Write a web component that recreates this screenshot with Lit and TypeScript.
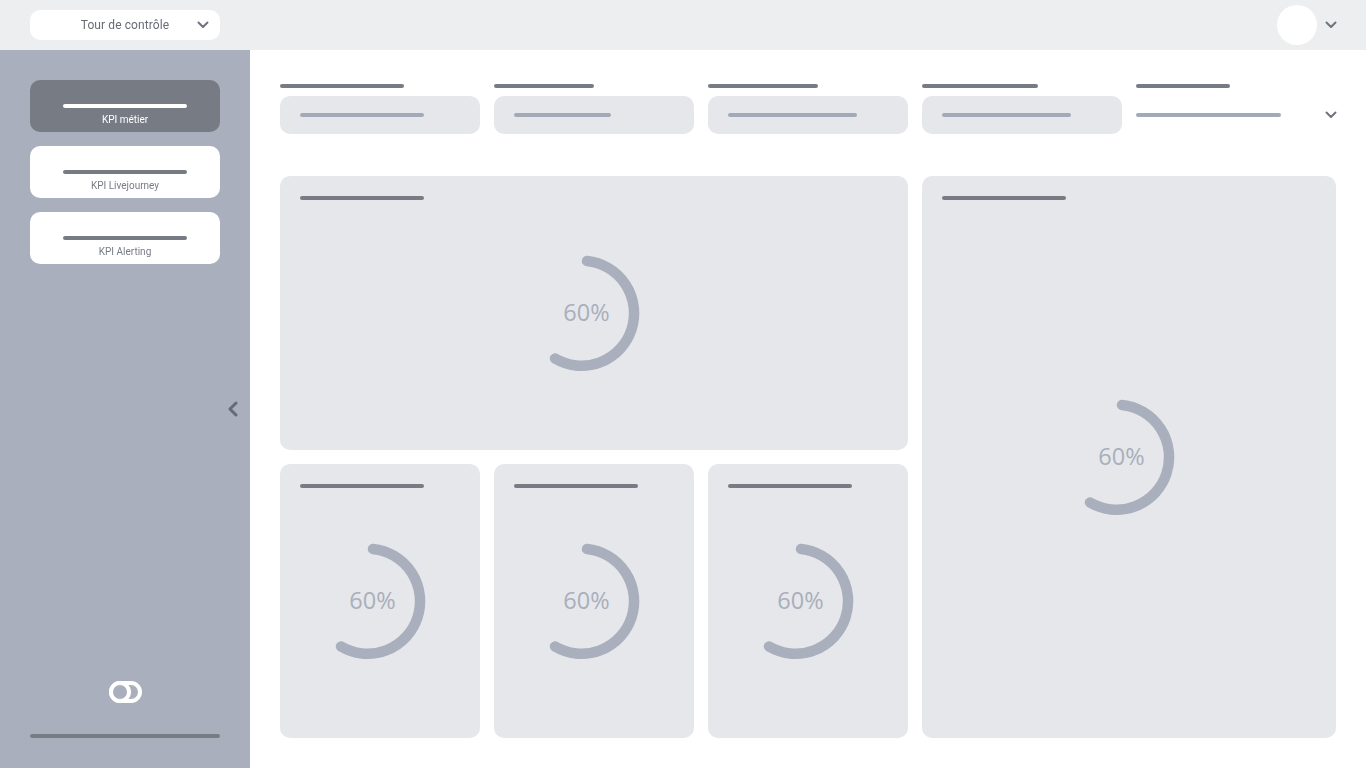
import { LitElement, html, css, svg } from "lit";
import { customElement } from "lit/decorators.js";

const chevron = () => html`<svg width="12" height="8" viewBox="0 0 12 8"><path d="M1.5 1.5 6 6l4.5-4.5" fill="none" stroke="#6f747d" stroke-width="2" stroke-linecap="round" stroke-linejoin="round"/></svg>`;

@customElement("kpi-donut")
class KpiDonut extends LitElement {
  static styles = css`
    :host { display: block; width: 200px; height: 124px; }
    svg { display: block; }
    text { font-family: "Open Sans", sans-serif; font-size: 23.5px; font-weight: 400; fill: #a9afbc; }
  `;
  render() {
    return html`<svg width="200" height="124" viewBox="0 0 200 124">
      <path d="M93 10 A52.5 52.5 0 1 1 61 107.5" fill="none" stroke="#a9afbc" stroke-width="10.5" stroke-linecap="round"/>
      ${svg`<text x="92.5" y="69.5" text-anchor="middle">60%</text>`}
    </svg>`;
  }
}

@customElement("app-root")
class AppRoot extends LitElement {
  static styles = css`
    :host { display: block; width: 1366px; height: 768px; overflow: hidden; background: #fff; font-family: Roboto, sans-serif; }
    .header { height: 50px; background: #eceef0; display: flex; align-items: center; padding: 0 29px 0 30px; box-sizing: border-box; }
    .select { width: 190px; height: 30px; border-radius: 10px; background: #fff; display: grid; grid-template-columns: 1fr auto 1fr; align-items: center; padding: 0 11px; box-sizing: border-box; font-size: 12px; letter-spacing: 0.1px; color: #666b74; }
    .select svg { justify-self: end; grid-column: 3; }
    .select span { grid-column: 2; will-change: opacity; }
    .avatar { width: 40px; height: 40px; border-radius: 50%; background: #fff; margin-left: auto; margin-right: 8px; }
    .body { display: flex; height: 718px; }
    .sidebar { position: relative; width: 250px; flex: none; background: #a9afbc; box-sizing: border-box; padding: 30px; display: flex; flex-direction: column; }
    .nav { display: flex; flex-direction: column; gap: 14px; }
    .nav-item { height: 52px; border-radius: 10px; background: #fff; display: flex; flex-direction: column; align-items: center; padding-top: 24px; box-sizing: border-box; color: #777b84; font-size: 10px; line-height: 12px; }
    .nav-item span { will-change: opacity; }
    .nav-item.active { background: #777b84; color: #fff; }
    .nav-item i { display: block; width: 124px; height: 4px; border-radius: 2px; background: #777b84; margin-bottom: 6px; flex: none; }
    .nav-item.active i { background: #fff; }
    .logo { margin-top: auto; align-self: center; display: block; margin-bottom: 31px; }
    .foot { height: 4px; border-radius: 2px; background: #777b84; flex: none; }
    .collapse { position: absolute; left: 228px; top: 351px; display: block; }
    .main { flex: 1; padding: 34px 30px 30px; box-sizing: border-box; }
    .bar { display: block; height: 4px; border-radius: 2px; }
    .dark { background: #777b84; }
    .light { background: #a3aab7; }
    .filters { display: grid; grid-template-columns: repeat(5, 200px); column-gap: 14px; margin-bottom: 42px; }
    .filter { display: flex; flex-direction: column; gap: 8px; }
    .input { height: 38px; border-radius: 10px; background: #e5e7eb; display: flex; align-items: center; justify-content: space-between; padding: 0 20px; box-sizing: border-box; }
    .input.plain { background: transparent; padding: 0 1px 0 0; }
    .input.plain svg { margin-right: -2px; }
    .grid { display: grid; grid-template-columns: repeat(5, 200px); grid-template-rows: 274px 274px; gap: 14px; }
    .card { background: #e5e7eb; border-radius: 10px; display: grid; min-width: 0; }
    .card > * { grid-area: 1 / 1; }
    .card .bar { align-self: start; justify-self: start; width: 124px; margin: 20px; }
    .card kpi-donut { place-self: center; }
    .wide { grid-column: 1 / span 3; }
    .tall { grid-column: 4 / span 2; grid-row: 1 / span 2; }
  `;

  private filters: [number, number][] = [[124, 124], [100, 97], [110, 129], [116, 129]];

  private card(cls = "") {
    return html`<div class="card ${cls}"><span class="bar dark"></span><kpi-donut></kpi-donut></div>`;
  }

  render() {
    return html`
      <div class="header">
        <div class="select"><span>Tour de contrôle</span>${chevron()}</div>
        <div class="avatar"></div>
        ${chevron()}
      </div>
      <div class="body">
        <aside class="sidebar">
          <div class="nav">
            <div class="nav-item active"><i></i><span>KPI métier</span></div>
            <div class="nav-item"><i></i><span>KPI Livejourney</span></div>
            <div class="nav-item"><i></i><span>KPI Alerting</span></div>
          </div>
          <svg class="logo" width="33" height="22" viewBox="0 0 33 22">
            <rect x="2" y="2" width="29" height="18" rx="9" fill="none" stroke="#fff" stroke-width="4"/>
            <circle cx="11" cy="11" r="9" fill="#a9afbc" stroke="#fff" stroke-width="4"/>
          </svg>
          <div class="foot"></div>
          <svg class="collapse" width="10" height="16" viewBox="0 0 10 16"><path d="M8 2 2 8l6 6" fill="none" stroke="#666b75" stroke-width="3" stroke-linecap="round" stroke-linejoin="round"/></svg>
        </aside>
        <main class="main">
          <div class="filters">
            ${this.filters.map(([a, b]) => html`<div class="filter">
              <span class="bar dark" style="width:${a}px"></span>
              <div class="input"><span class="bar light" style="width:${b}px"></span></div>
            </div>`)}
            <div class="filter">
              <span class="bar dark" style="width:94px"></span>
              <div class="input plain"><span class="bar light" style="width:145px"></span>${chevron()}</div>
            </div>
          </div>
          <div class="grid">
            ${this.card("wide")}
            ${this.card("tall")}
            ${this.card()}
            ${this.card()}
            ${this.card()}
          </div>
        </main>
      </div>
    `;
  }
}
